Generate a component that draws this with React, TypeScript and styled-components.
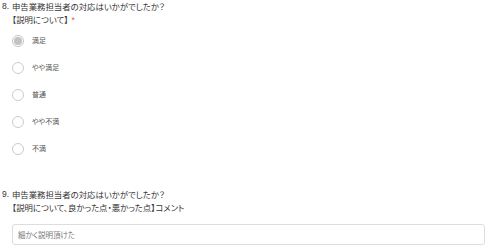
import React from "react";
import styled, { createGlobalStyle } from "styled-components";

const GlobalStyle = createGlobalStyle`
  html, body {
    margin: 0;
    padding: 0;
    background: #ffffff;
  }
  body {
    font-family: "Noto Sans CJK JP", "Noto Sans", sans-serif;
    font-feature-settings: "palt";
    color: #333333;
  }
`;

const Page = styled.main`
  width: 488px;
  height: 248px;
  overflow: hidden;
  padding: 0 3px 0 2px;
  box-sizing: border-box;
`;

const Question = styled.section<{ $top?: number }>`
  margin-top: ${(p) => p.$top || 0}px;
`;

const Header = styled.div`
  display: grid;
  grid-template-columns: 10px 1fr;
  font-size: 8.4px;
  line-height: 12.5px;
  color: #333333;
`;

const Number = styled.span`
  font-family: "Liberation Sans", Arial, sans-serif;
  font-size: 8.5px;
`;

const Title = styled.div`
  display: flex;
  flex-direction: column;
`;

const Required = styled.span`
  color: #d9534f;
  margin-left: 3px;
  font-family: "Liberation Sans", Arial, sans-serif;
`;

const OptionList = styled.ul`
  list-style: none;
  margin: 1px 0 0 0;
  padding: 0 0 0 10px;
`;

const Option = styled.li`
  display: flex;
  align-items: center;
  gap: 8px;
  height: 27px;
`;

const Radio = styled.span<{ $checked?: boolean }>`
  width: 12px;
  height: 12px;
  box-sizing: border-box;
  border-radius: 50%;
  border: 1px solid ${(p) => (p.$checked ? "#c4c4c4" : "#cccccc")};
  background: #ffffff;
  display: flex;
  align-items: center;
  justify-content: center;
  flex-shrink: 0;

  &::after {
    content: "";
    display: ${(p) => (p.$checked ? "block" : "none")};
    width: 8px;
    height: 8px;
    border-radius: 50%;
    background: #c2c2c2;
  }
`;

const Label = styled.span`
  font-size: 7px;
  color: #555555;
  line-height: 1;
`;

const TextBox = styled.div`
  margin: 11px 0 0 10px;
  height: 21px;
  box-sizing: border-box;
  border: 1px solid #dddddd;
  border-radius: 3px;
  display: flex;
  align-items: center;
  padding-left: 5px;
  font-size: 7.5px;
  color: #777777;
`;

const options = ["満足", "やや満足", "普通", "やや不満", "不満"];

export default function App() {
  return (
    <>
      <GlobalStyle />
      <Page>
        <Question>
          <Header>
            <Number>8.</Number>
            <Title>
              <span>申告業務担当者の対応はいかがでしたか？</span>
              <span>
                【説明について】<Required>*</Required>
              </span>
            </Title>
          </Header>
          <OptionList>
            {options.map((opt, i) => (
              <Option key={opt}>
                <Radio $checked={i === 0} />
                <Label>{opt}</Label>
              </Option>
            ))}
          </OptionList>
        </Question>
        <Question $top={26}>
          <Header>
            <Number>9.</Number>
            <Title>
              <span>申告業務担当者の対応はいかがでしたか？</span>
              <span>【説明について、良かった点・悪かった点】コメント</span>
            </Title>
          </Header>
          <TextBox>細かく説明頂けた</TextBox>
        </Question>
      </Page>
    </>
  );
}
